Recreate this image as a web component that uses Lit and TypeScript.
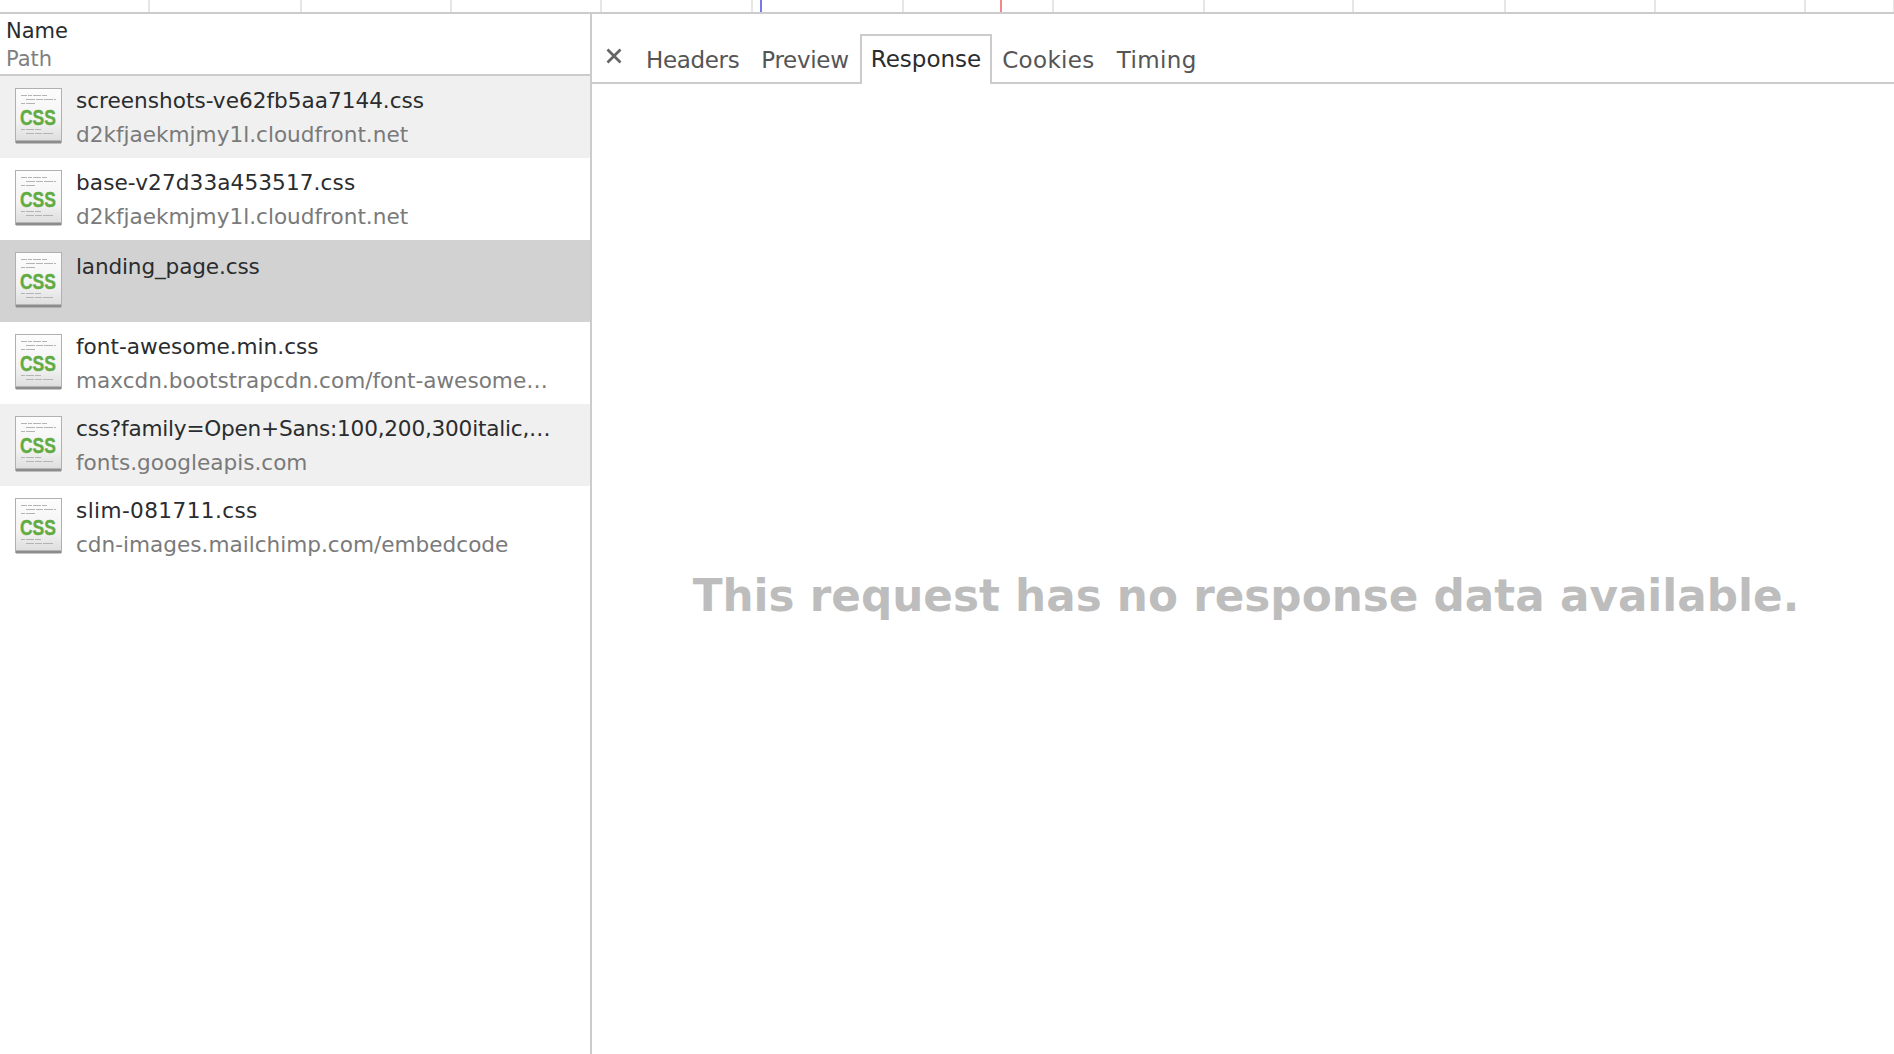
import { LitElement, html, css, svg } from "lit";
import { customElement } from "lit/decorators.js";

const ROWS = [
  { name: "screenshots-ve62fb5aa7144.css", path: "d2kfjaekmjmy1l.cloudfront.net", tone: "alt", fit: 0 },
  { name: "base-v27d33a453517.css", path: "d2kfjaekmjmy1l.cloudfront.net", tone: "", fit: 0.1 },
  { name: "landing_page.css", path: "", tone: "sel", fit: -0.15 },
  { name: "font-awesome.min.css", path: "maxcdn.bootstrapcdn.com/font-awesome…", tone: "", fit: 0 },
  { name: "css?family=Open+Sans:100,200,300italic,…", path: "fonts.googleapis.com", tone: "alt", fit: -0.21 },
  { name: "slim-081711.css", path: "cdn-images.mailchimp.com/embedcode", tone: "", fit: 0.4 },
];
const TABS = [
  { label: "Headers", fit: -0.35 },
  { label: "Preview", fit: -0.3 },
  { label: "Response", fit: 0 },
  { label: "Cookies", fit: 0.35 },
  { label: "Timing", fit: 0.4 },
];
const TICKS = [150, 152, 150, 150, 151, 151, 150, 151, 149, 152, 150, 150, 89];

const lines = (ys: number[][]) =>
  ys.map(([x, y, w]) => svg`<rect x=${x} y=${y} width=${w} height="1" fill="#b4b4b4"></rect>`);

const icon = html`<svg class="icon" viewBox="0 0 47 56" width="47" height="56">
  <defs>
    <linearGradient id="pg" x1="0" y1="0" x2="0" y2="1">
      <stop offset="0" stop-color="#fdfdfd"></stop>
      <stop offset="0.6" stop-color="#f3f3f3"></stop>
      <stop offset="1" stop-color="#dcdcdc"></stop>
    </linearGradient>
  </defs>
  <rect x="0.5" y="0.5" width="46" height="54" fill="url(#pg)" stroke="#b0b0b0"></rect>
  <rect x="1" y="52.5" width="45" height="3" fill="#8c8c8c"></rect>
  ${lines([
    [6, 7, 6], [13, 7, 4], [18, 7, 8], [27, 7, 5],
    [11, 11, 9], [21, 11, 7], [29, 11, 9], [39, 11, 2],
    [6, 15, 4], [11, 15, 9],
    [6, 41, 4], [11, 41, 8], [20, 41, 6],
    [11, 45, 8], [20, 45, 7], [28, 45, 10],
  ])}
  <text transform="translate(5 37) scale(1 1.28)" class="css">CSS</text>
</svg>`;

@customElement("app-root")
export class AppRoot extends LitElement {
  static styles = css`
    :host {
      display: flex;
      flex-direction: column;
      width: 1894px;
      height: 1054px;
      background: #fff;
      overflow: hidden;
      font-family: "DejaVu Sans", sans-serif;
      font-size: 21.6px;
      color: #2a2c2e;
    }
    .ruler {
      position: relative;
      display: flex;
      flex: none;
      height: 12px;
      border-bottom: 2px solid #ccc;
    }
    .tick { flex: none; box-sizing: border-box; border-right: 2px solid #e6e6e6; }
    .mark { position: absolute; top: 0; width: 2px; height: 12px; }
    .mark.blue { left: 760px; background: #7a7ae6; }
    .mark.red { left: 1000px; background: #f08a8a; }
    .main { flex: 1; display: flex; min-height: 0; }
    .side {
      flex: none;
      width: 590px;
      border-right: 2px solid #ccc;
    }
    .head {
      box-sizing: border-box;
      height: 62px;
      padding: 3px 6px 0;
      border-bottom: 2px solid #ccc;
      font-size: 21px;
      line-height: 28px;
    }
    .sub { color: #7f7f7f; }
    .row {
      box-sizing: border-box;
      display: flex;
      height: 82px;
      padding: 12px 15px 0;
      gap: 14px;
    }
    .row.alt { background: #f0f0f0; }
    .row.sel { background: #d2d2d2; }
    .icon { flex: none; }
    .css {
      font-family: "Liberation Sans", sans-serif;
      font-weight: 700;
      font-size: 17.5px;
      fill: #62ab42;
      stroke: #62ab42;
      stroke-width: 0.3px;
    }
    .text { min-width: 0; white-space: nowrap; }
    .name { line-height: 28px; margin-top: -1px; }
    .row.sel .name { margin-top: 1px; }
    .path { line-height: 28px; margin-top: 6px; color: #7a7a7a; }
    .pane { flex: 1; display: flex; flex-direction: column; min-width: 0; }
    .tabs {
      flex: none;
      box-sizing: border-box;
      height: 70px;
      display: flex;
      align-items: flex-end;
      padding-left: 13px;
      border-bottom: 2px solid #ccc;
      font-size: 23px;
      color: #555;
    }
    .close { width: 30px; height: 48px; box-sizing: border-box; padding: 14px 0 0 1px; flex: none; }
    .close svg { display: block; }
    .tab {
      box-sizing: border-box;
      height: 48px;
      padding: 7px 9px 0;
      margin-bottom: -2px;
      line-height: 30px;
      border: 2px solid transparent;
      border-bottom: none;
    }
    .tab.on {
      border-color: #ccc;
      background: #fff;
      height: 50px;
      padding-top: 8px;
      margin-right: -1px;
      color: #2a2c2e;
    }
    .empty {
      flex: 1;
      display: flex;
      justify-content: center;
      padding: 486px 0 0 6px;
      box-sizing: border-box;
      font-size: 43.7px;
      line-height: 52px;
      font-weight: 700;
      color: #bdbdbd;
      white-space: nowrap;
    }
  `;

  render() {
    return html`
      <div class="ruler">
        ${TICKS.map((w) => html`<div class="tick" style="width:${w}px"></div>`)}
        <div class="mark blue"></div>
        <div class="mark red"></div>
      </div>
      <div class="main">
        <div class="side">
          <div class="head"><div>Name</div><div class="sub">Path</div></div>
          ${ROWS.map(
            (r) => html`<div class="row ${r.tone}">
              ${icon}
              <div class="text">
                <div class="name" style="letter-spacing:${r.fit}px">${r.name}</div>
                <div class="path">${r.path}</div>
              </div>
            </div>`
          )}
        </div>
        <div class="pane">
          <div class="tabs">
            <div class="close">
              <svg width="16" height="16" viewBox="0 0 16 16"><path d="M1.5 1.5 L14.5 14.5 M14.5 1.5 L1.5 14.5" stroke="#666" stroke-width="2.8" fill="none"></path></svg>
            </div>
            ${TABS.map(
              (t) => html`<div class="tab ${t.label === "Response" ? "on" : ""}" style="letter-spacing:${t.fit}px">${t.label}</div>`
            )}
          </div>
          <div class="empty">This request has no response data available.</div>
        </div>
      </div>
    `;
  }
}
